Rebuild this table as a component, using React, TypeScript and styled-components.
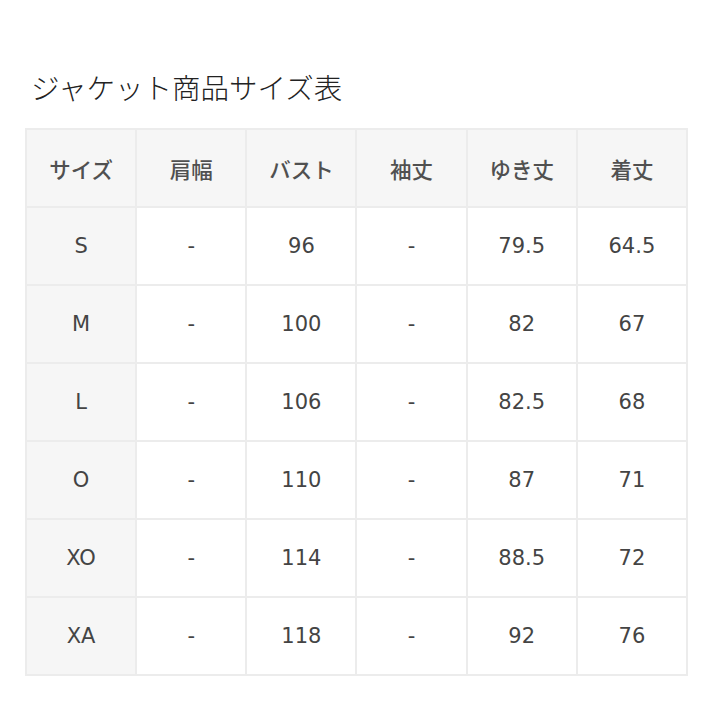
import React from 'react';
import styled, { createGlobalStyle } from 'styled-components';

const GlobalStyle = createGlobalStyle`
  html, body {
    margin: 0;
    padding: 0;
    background: #ffffff;
  }
`;

const Page = styled.div`
  width: 720px;
  height: 720px;
  padding: 66px 0 0 25px;
  box-sizing: border-box;
  font-family: "DejaVu Sans", "Noto Sans CJK JP", sans-serif;
  color: #444444;
`;

const Title = styled.h1`
  margin: 0 0 20px 6px;
  font-family: "Noto Sans CJK JP", sans-serif;
  font-size: 28.5px;
  font-weight: 300;
  line-height: 42px;
  color: #222222;
`;

const Table = styled.table`
  border-collapse: collapse;
  width: 663px;
  table-layout: fixed;
  border: 2px solid #e6e6e6;
`;

const Cell = styled.td<{ $head?: boolean }>`
  height: 76px;
  padding: 0;
  border: 2px solid #ececec;
  text-align: center;
  vertical-align: middle;
  font-size: 21px;
  background: ${(p) => (p.$head ? '#f6f6f6' : '#ffffff')};
  color: #444444;
`;

const HeadCell = styled(Cell).attrs({ as: 'th' })`
  font-family: "Noto Sans CJK JP", sans-serif;
  font-weight: 500;
  font-size: 21.5px;
  color: #505050;
`;

const headers = ['サイズ', '肩幅', 'バスト', '袖丈', 'ゆき丈', '着丈'];

const rows = [
  ['S', '-', '96', '-', '79.5', '64.5'],
  ['M', '-', '100', '-', '82', '67'],
  ['L', '-', '106', '-', '82.5', '68'],
  ['O', '-', '110', '-', '87', '71'],
  ['XO', '-', '114', '-', '88.5', '72'],
  ['XA', '-', '118', '-', '92', '76'],
];

export default function App() {
  return (
    <Page>
      <GlobalStyle />
      <Title>ジャケット商品サイズ表</Title>
      <Table>
        <thead>
          <tr>
            {headers.map((h) => (
              <HeadCell key={h} $head>
                {h}
              </HeadCell>
            ))}
          </tr>
        </thead>
        <tbody>
          {rows.map((r) => (
            <tr key={r[0]}>
              {r.map((v, i) => (
                <Cell key={i} $head={i === 0}>
                  {v}
                </Cell>
              ))}
            </tr>
          ))}
        </tbody>
      </Table>
    </Page>
  );
}
